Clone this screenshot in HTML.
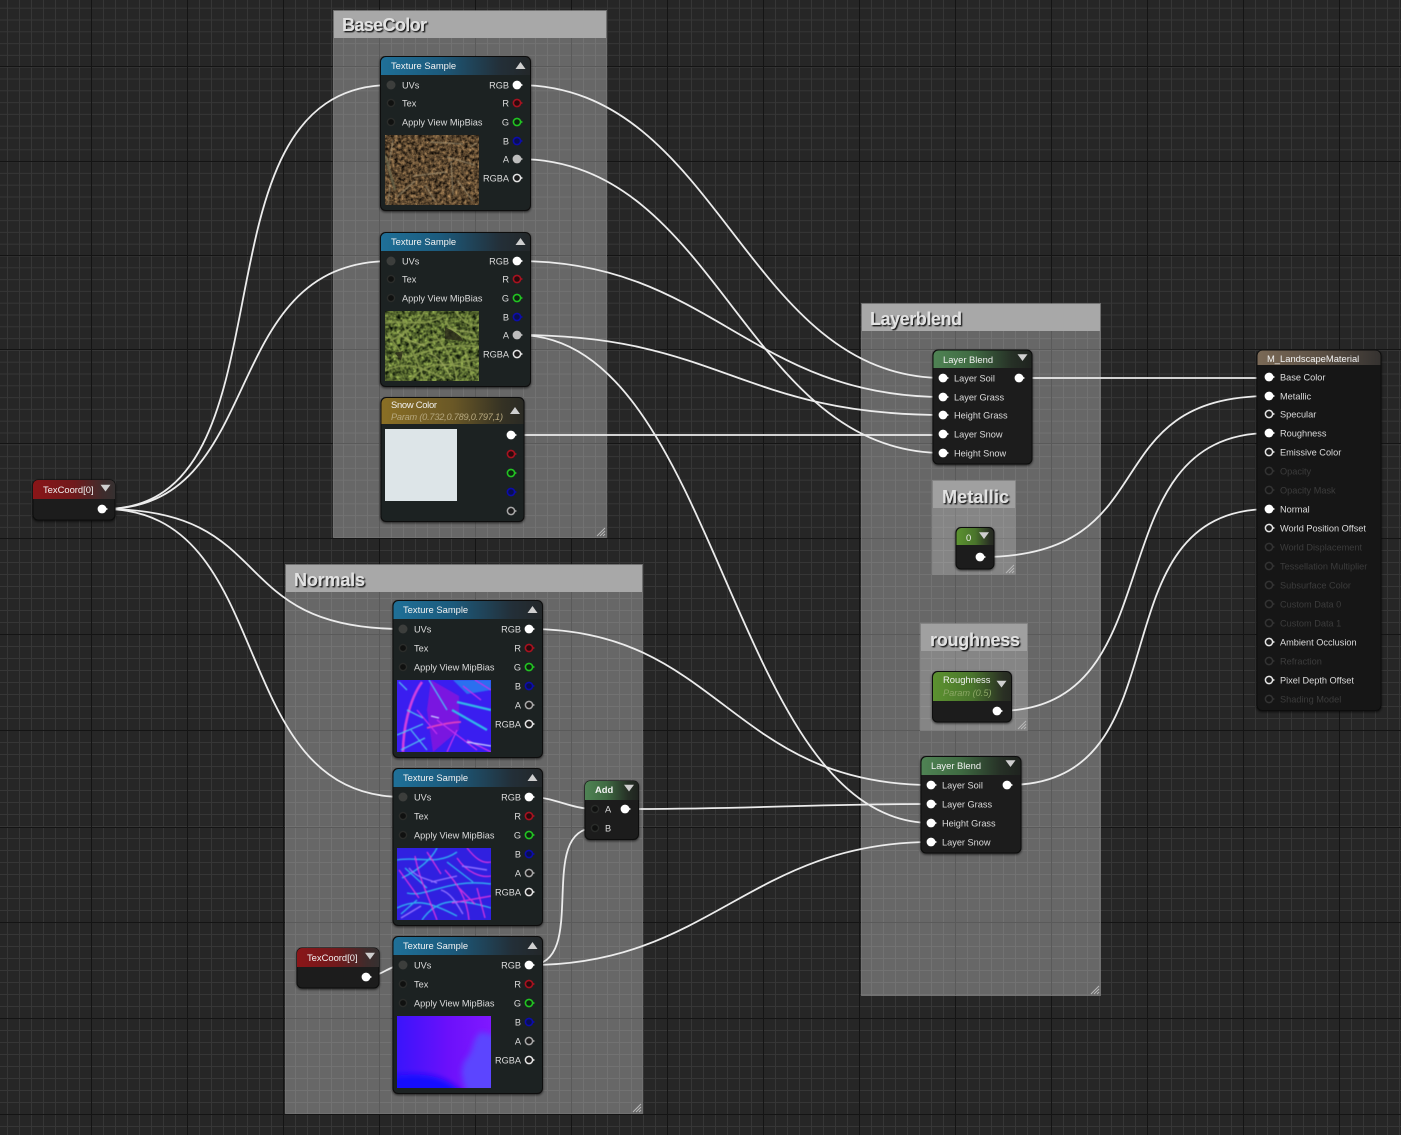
<!DOCTYPE html>
<html lang="en"><head><meta charset="utf-8"><title>M_LandscapeMaterial</title>
<style>
html,body{margin:0;padding:0;background:#262626;overflow:hidden}
svg{display:block}
text{font-family:"Liberation Sans",sans-serif;font-size:9.2px;fill:#dcdcdc}
.h{fill:#f2f2f2;font-size:9.4px}
.t{font-weight:bold;font-size:18px;fill:#e2e2e2}
.e{text-anchor:end}
.i{font-style:italic}
.d{fill:#3c3c3c}
.w{fill:none;stroke:#ececec;stroke-width:1.8}
.n{stroke:#0b0b0b;stroke-width:1}
</style></head><body>
<svg xmlns="http://www.w3.org/2000/svg" width="1401" height="1135" viewBox="0 0 1401 1135">
<defs>
<pattern id="gx" width="12" height="2000" patternUnits="userSpaceOnUse" x="7"><rect width="1" height="2000" fill="#363636"/></pattern>
<pattern id="gy1" width="2000" height="11.8" patternUnits="userSpaceOnUse" y="7.7"><rect width="2000" height="1" fill="#363636"/></pattern>
<pattern id="gy2" width="2000" height="12" patternUnits="userSpaceOnUse" y="10"><rect width="2000" height="1" fill="#363636"/></pattern>
<linearGradient id="hT" x1="0" x2="1" y1="0" y2="0"><stop offset="0" stop-color="#1f7098"/><stop offset=".4" stop-color="#1c5a7c"/><stop offset=".8" stop-color="#232f38"/><stop offset="1" stop-color="#232729"/></linearGradient>
<linearGradient id="hL" x1="0" x2="1" y1="0" y2="0"><stop offset="0" stop-color="#4f8354"/><stop offset=".4" stop-color="#3f6a42"/><stop offset=".8" stop-color="#263026"/><stop offset="1" stop-color="#1f231f"/></linearGradient>
<linearGradient id="hR" x1="0" x2="1" y1="0" y2="0"><stop offset="0" stop-color="#8a1518"/><stop offset=".5" stop-color="#701a1c"/><stop offset=".85" stop-color="#3f2c2c"/><stop offset="1" stop-color="#353030"/></linearGradient>
<linearGradient id="hS" x1="0" x2="1" y1="0" y2="0"><stop offset="0" stop-color="#8a6f25"/><stop offset=".5" stop-color="#6a5826"/><stop offset=".85" stop-color="#353224"/><stop offset="1" stop-color="#2a2a24"/></linearGradient>
<linearGradient id="hG" x1="0" x2="1" y1="0" y2="0"><stop offset="0" stop-color="#5c9230"/><stop offset=".5" stop-color="#4a752c"/><stop offset=".9" stop-color="#2a3024"/><stop offset="1" stop-color="#262a22"/></linearGradient>
<linearGradient id="hM" x1="0" x2="1" y1="0" y2="0"><stop offset="0" stop-color="#7a6956"/><stop offset=".55" stop-color="#5a4f44"/><stop offset="1" stop-color="#353230"/></linearGradient>
<linearGradient id="nm3" x1="0" x2="1" y1="0" y2="0"><stop offset="0" stop-color="#3a14fb"/><stop offset=".55" stop-color="#6c10fb"/><stop offset="1" stop-color="#8018ff"/></linearGradient>
<filter id="ds" x="-10%" y="-10%" width="120%" height="120%"><feDropShadow dx="0" dy="1" stdDeviation="1.2" flood-color="#000" flood-opacity=".7"/></filter>
<filter id="ts" x="-5%" y="-20%" width="115%" height="150%"><feDropShadow dx="1.3" dy="1.3" stdDeviation=".5" flood-color="#000" flood-opacity=".9"/></filter>
<filter id="b1"><feGaussianBlur stdDeviation=".45"/></filter>
<filter id="b3" x="-30%" y="-30%" width="160%" height="160%"><feGaussianBlur stdDeviation="3"/></filter>
<filter id="soil" color-interpolation-filters="sRGB" x="0" y="0" width="100%" height="100%"><feTurbulence type="fractalNoise" baseFrequency=".3" numOctaves="3" seed="4"/><feColorMatrix values=".95 0 0 0 -.12  .75 0 0 0 -.1  .5 0 0 0 -.07  0 0 0 0 1"/></filter>
<filter id="grass" color-interpolation-filters="sRGB" x="0" y="0" width="100%" height="100%"><feTurbulence type="fractalNoise" baseFrequency=".25" numOctaves="3" seed="9"/><feColorMatrix values=".85 0 0 0 -.1  .95 0 0 0 -.08  .45 0 0 0 -.05  0 0 0 0 1"/></filter>
<g id="pw"><circle r="4.4" fill="#fff"/><path d="M4.2 -1.3L6 0L4.200 1.3Z" fill="#fff"/></g>
<g id="pa"><circle r="4.4" fill="#bdbdbd"/><path d="M4.2 -1.3L6 0L4.200 1.3Z" fill="#bdbdbd"/></g>
<g id="pr"><circle r="3.6" fill="#2a0a0c" stroke="#a81220" stroke-width="1.6"/><path d="M4.2 -1.3L6 0L4.200 1.3Z" fill="#a81220"/></g>
<g id="pg"><circle r="3.6" fill="#0e2410" stroke="#22c422" stroke-width="1.6"/><path d="M4.2 -1.3L6 0L4.200 1.3Z" fill="#22c422"/></g>
<g id="pb"><circle r="3.6" fill="#0a0f50" stroke="#0c0cac" stroke-width="1.6"/><path d="M4.2 -1.3L6 0L4.200 1.3Z" fill="#0c0cac"/></g>
<g id="po"><circle r="3.6" fill="#1b1b1b" stroke="#e4e4e4" stroke-width="1.5"/><path d="M4.2 -1.3L6 0L4.200 1.3Z" fill="#e4e4e4"/></g>
<g id="ps"><circle r="3.6" fill="#1b1b1b" stroke="#a8a8a8" stroke-width="1.5"/><path d="M4.2 -1.3L6 0L4.200 1.3Z" fill="#a8a8a8"/></g>
<g id="pd"><circle r="3.6" fill="#151515" stroke="#333" stroke-width="1.5"/><path d="M4.2 -1.3L6 0L4.200 1.3Z" fill="#333"/></g>
<g id="pu"><circle r="4.5" fill="#3c3e3c"/></g>
<g id="pt"><circle r="3.6" fill="#101110" stroke="#2a2c2a" stroke-width="1.4"/></g>
<path id="up" d="M-5 3.5L0 -3.500L5 3.500Z" fill="#cfcfcf"/>
<path id="dn" d="M-5 -3.200L5 -3.200L0 3.500Z" fill="#cfcfcf"/>
<g id="rs" stroke="#b8b8b8" stroke-width="1"><path d="M-9 -1L-1 -9M-6 -1L-1 -6M-3 -1L-1 -3"/></g>
</defs>

<!-- grid -->
<rect width="1401" height="1135" fill="#262626"/>
<rect width="1401" height="1135" fill="url(#gx)"/>
<rect width="1401" height="538" fill="url(#gy1)"/>
<rect y="538" width="1401" height="597" fill="url(#gy2)"/>
<g fill="#141414">
<rect x="91" width="1" height="1135"/><rect x="187" width="1" height="1135"/><rect x="283" width="1" height="1135"/><rect x="379" width="1" height="1135"/><rect x="475" width="1" height="1135"/><rect x="571" width="1" height="1135"/><rect x="667" width="1" height="1135"/><rect x="763" width="1" height="1135"/><rect x="859" width="1" height="1135"/><rect x="955" width="1" height="1135"/><rect x="1051" width="1" height="1135"/><rect x="1147" width="1" height="1135"/><rect x="1243" width="1" height="1135"/><rect x="1339" width="1" height="1135"/>
<rect y="66" width="1401" height="1"/><rect y="161" width="1401" height="1"/><rect y="255" width="1401" height="1"/><rect y="349" width="1401" height="1"/><rect y="443" width="1401" height="1"/><rect y="538" width="1401" height="1"/><rect y="634" width="1401" height="1"/><rect y="730" width="1401" height="1"/><rect y="827" width="1401" height="1"/><rect y="922" width="1401" height="1"/><rect y="1018" width="1401" height="1"/><rect y="1114" width="1401" height="1"/>
</g>

<!-- comment boxes -->
<g fill="#fff" fill-opacity=".3" stroke="#8c8c8c" stroke-opacity=".6">
<rect x="333.500" y="10.500" width="273" height="527"/>
<rect x="285.500" y="564.500" width="357" height="549"/>
<rect x="861.500" y="303.500" width="239" height="692"/>
<rect x="932.500" y="480.500" width="83" height="94" fill-opacity=".2"/>
<rect x="920.500" y="623.500" width="107" height="107" fill-opacity=".2"/>
</g>
<g fill="#a8a8a8">
<rect x="334" y="11" width="272" height="27"/>
<rect x="286" y="565" width="356" height="27"/>
<rect x="862" y="304" width="238" height="27"/>
<rect x="933" y="481" width="82" height="27" fill="#a0a0a0"/>
<rect x="921" y="624" width="106" height="27" fill="#a0a0a0"/>
</g>
<g filter="url(#ts)">
<text class="t" x="342" y="31" textLength="85">BaseColor</text>
<text class="t" x="294" y="586" textLength="71">Normals</text>
<text class="t" x="870" y="325" textLength="92">Layerblend</text>
<text class="t" x="942" y="503" textLength="67">Metallic</text>
<text class="t" x="930" y="646" textLength="90">roughness</text>
</g>
<use href="#rs" x="606" y="537"/><use href="#rs" x="642" y="1113"/><use href="#rs" x="1100" y="995"/><use href="#rs" x="1015" y="574"/><use href="#rs" x="1027" y="730"/>

<!-- wires -->
<g class="w">
<path class="w" d="M104 509C304 509 180 85 391 85"/>
<path class="w" d="M104 509C270 509 214 261 391 261"/>
<path class="w" d="M104 509C280 509 223 629 403 629"/>
<path class="w" d="M104 509C280 509 223 797 403 797"/>
<path class="w" d="M367 977C380 977 390 965 403 965"/>
<path class="w" d="M518 85C720 85 744 378 944 378"/>
<path class="w" d="M518 159C720 159 744 453 944 453"/>
<path class="w" d="M518 261C710 261 750 397 944 397"/>
<path class="w" d="M518 335C720 335 740 415 944 415"/>
<path class="w" d="M518 335C720 335 730 823 932 823"/>
<path class="w" d="M512 435H944"/>
<path class="w" d="M530 629C720 629 730 785 932 785"/>
<path class="w" d="M530 797C555 797 570 809 595 809"/>
<path class="w" d="M626 809C760 809 800 804 932 804"/>
<path class="w" d="M530 965C590 965 535 828 595 828"/>
<path class="w" d="M530 965C710 965 750 842 932 842"/>
<path class="w" d="M1020 378H1270"/>
<path class="w" d="M981 557C1170 557 1090 396 1270 396"/>
<path class="w" d="M998 711C1180 711 1090 433 1270 433"/>
<path class="w" d="M1008 785C1190 785 1090 509 1270 509"/>
</g>

<!-- TexCoord 1 -->
<g filter="url(#ds)"><rect class="n" x="33" y="480" width="82" height="40" rx="5" fill="#1b1c1b"/></g>
<path d="M33 499V485a5 5 0 0 1 5-5H110a5 5 0 0 1 5 5V499Z" fill="url(#hR)"/>
<text class="h" x="43" y="493">TexCoord[0]</text><use href="#dn" x="105.500" y="488"/>
<use href="#pw" x="102" y="509"/>

<!-- TS1 -->
<g filter="url(#ds)"><rect class="n" x="380.500" y="56.500" width="150" height="154" rx="5" fill="#1f2120"/></g>
<path d="M381 75V62a5 5 0 0 1 5-5H525a5 5 0 0 1 5 5V75Z" fill="url(#hT)"/>
<text class="h" x="391" y="69">Texture Sample</text><use href="#up" x="520.500" y="65.500"/>
<use href="#pu" x="391" y="85"/><use href="#pt" x="391" y="103"/><use href="#pt" x="391" y="122"/>
<text x="402" y="88.500">UVs</text><text x="402" y="106.500">Tex</text><text x="402" y="125.500">Apply View MipBias</text>
<text class="e" x="509" y="88.500">RGB</text><text class="e" x="509" y="106.500">R</text><text class="e" x="509" y="125.500">G</text><text class="e" x="509" y="144.500">B</text><text class="e" x="509" y="162.500">A</text><text class="e" x="509" y="181.500">RGBA</text>
<use href="#pw" x="517" y="85"/><use href="#pr" x="517" y="103"/><use href="#pg" x="517" y="122"/><use href="#pb" x="517" y="141"/><use href="#pa" x="517" y="159"/><use href="#po" x="517" y="178"/>
<svg x="385" y="135" width="94" height="70" viewBox="0 0 94 70">
<rect width="94" height="70" filter="url(#soil)"/>
<g fill="none" stroke="#a89878" stroke-width="1.2" opacity=".7" filter="url(#b1)">
<path d="M45 7L78 9M28 41L62 37M5 50L3 70M62 22L90 30M66 26L68 60M72 45L88 66M12 62L30 46M8 5L4 30M85 12L92 8M40 50L50 66"/>
<path d="M20 12L30 30M50 25L40 42M75 30L80 42" stroke="#6e5a40"/>
<path d="M0 20L10 55" stroke="#6a6a50" stroke-width="2.500"/>
</g></svg>

<!-- TS2 -->
<g filter="url(#ds)"><rect class="n" x="380.500" y="232.500" width="150" height="154" rx="5" fill="#1f2120"/></g>
<path d="M381 251V238a5 5 0 0 1 5-5H525a5 5 0 0 1 5 5V251Z" fill="url(#hT)"/>
<text class="h" x="391" y="245">Texture Sample</text><use href="#up" x="520.500" y="241.500"/>
<use href="#pu" x="391" y="261"/><use href="#pt" x="391" y="279"/><use href="#pt" x="391" y="298"/>
<text x="402" y="264.500">UVs</text><text x="402" y="282.500">Tex</text><text x="402" y="301.500">Apply View MipBias</text>
<text class="e" x="509" y="264.500">RGB</text><text class="e" x="509" y="282.500">R</text><text class="e" x="509" y="301.500">G</text><text class="e" x="509" y="320.500">B</text><text class="e" x="509" y="338.500">A</text><text class="e" x="509" y="357.500">RGBA</text>
<use href="#pw" x="517" y="261"/><use href="#pr" x="517" y="279"/><use href="#pg" x="517" y="298"/><use href="#pb" x="517" y="317"/><use href="#pa" x="517" y="335"/><use href="#po" x="517" y="354"/>
<svg x="385" y="311" width="94" height="70" viewBox="0 0 94 70">
<rect width="94" height="70" filter="url(#grass)"/>
<g fill="none" stroke="#8c9e50" stroke-width="1.600" opacity=".9" filter="url(#b1)">
<path d="M0 12C20 8 40 18 60 4M5 30C25 20 35 10 40 0M10 45C30 50 50 30 94 36M0 60C20 50 35 55 60 68M25 70C40 50 60 50 94 60M60 10C70 25 85 30 94 28M48 22C60 35 70 50 72 70M18 8C22 30 30 45 40 70M70 0C78 10 85 16 94 14M2 22L22 50M55 55L94 48M80 40L88 68M34 34L60 28"/>
<path d="M12 20C20 30 28 30 40 35M44 42C55 45 62 60 66 66M65 18L90 22" stroke="#a8b468" stroke-width="1"/>
</g>
<path d="M60 16C68 20 76 24 78 30L60 28ZM10 42L18 40L16 50Z" fill="#2a2a1a" opacity=".8"/>
</svg>

<!-- Snow Color -->
<g filter="url(#ds)"><rect class="n" x="381" y="397.500" width="143" height="124" rx="5" fill="#1f2120"/></g>
<path d="M381.500 424V403a5 5 0 0 1 5-5H518.500a5 5 0 0 1 5 5V424Z" fill="url(#hS)"/>
<text class="h" x="391" y="408" textLength="46">Snow Color</text><text class="i" x="391" y="420" style="fill:#b5a77e" textLength="112">Param (0.732,0.789,0.797,1)</text>
<use href="#up" x="515" y="410.500"/>
<rect x="385" y="429" width="72" height="72" fill="#dde5e8"/>
<use href="#pw" x="511" y="435"/><use href="#pr" x="511" y="454"/><use href="#pg" x="511" y="473"/><use href="#pb" x="511" y="492"/><use href="#ps" x="511" y="511"/>

<!-- N1 -->
<g filter="url(#ds)"><rect class="n" x="393" y="600.500" width="149.500" height="157" rx="5" fill="#1f2120"/></g>
<path d="M393.500 619V606a5 5 0 0 1 5-5H537a5 5 0 0 1 5 5V619Z" fill="url(#hT)"/>
<text class="h" x="403" y="613">Texture Sample</text><use href="#up" x="532.500" y="609.500"/>
<use href="#pu" x="403" y="629"/><use href="#pt" x="403" y="648"/><use href="#pt" x="403" y="667"/>
<text x="414" y="632.500">UVs</text><text x="414" y="651.500">Tex</text><text x="414" y="670.500">Apply View MipBias</text>
<text class="e" x="521" y="632.500">RGB</text><text class="e" x="521" y="651.500">R</text><text class="e" x="521" y="670.500">G</text><text class="e" x="521" y="689.500">B</text><text class="e" x="521" y="708.500">A</text><text class="e" x="521" y="727.500">RGBA</text>
<use href="#pw" x="529" y="629"/><use href="#pr" x="529" y="648"/><use href="#pg" x="529" y="667"/><use href="#pb" x="529" y="686"/><use href="#ps" x="529" y="705"/><use href="#po" x="529" y="724"/>
<svg x="397" y="680" width="94" height="72" viewBox="0 0 94 72">
<rect width="94" height="72" fill="#3a1ef0"/>
<path d="M34 0L62 16L62 50L36 72L30 30Z" fill="#7a18e0" filter="url(#b1)"/><path d="M56 0H94V10L70 14Z" fill="#2a70f0" filter="url(#b1)"/>
<g fill="none" filter="url(#b1)">
<path d="M25 2C12 20 6 50 6 72" stroke="#d040e0" stroke-width="2.600"/>
<path d="M2 2L10 10M32 0L50 30M0 55L26 44M4 70L28 58M10 30L26 38M14 50L30 70" stroke="#50b0f0" stroke-width="1.400"/>
<path d="M55 30L90 50M60 22L94 30" stroke="#30b8e8" stroke-width="2.200"/>
<path d="M30 48C44 44 58 42 64 42" stroke="#e040c0" stroke-width="1.800"/>
<path d="M40 40L80 70M60 50L50 72M78 0L94 10M70 60L94 72M66 6L84 20M20 30L40 54" stroke="#c030f0" stroke-width="1.300"/>
<path d="M70 62L94 66M34 36L42 38" stroke="#c8d0ff" stroke-width="1.300"/>
</g></svg>

<!-- N2 -->
<g filter="url(#ds)"><rect class="n" x="393" y="768.500" width="149.500" height="157" rx="5" fill="#1f2120"/></g>
<path d="M393.500 787V774a5 5 0 0 1 5-5H537a5 5 0 0 1 5 5V787Z" fill="url(#hT)"/>
<text class="h" x="403" y="781">Texture Sample</text><use href="#up" x="532.500" y="777.500"/>
<use href="#pu" x="403" y="797"/><use href="#pt" x="403" y="816"/><use href="#pt" x="403" y="835"/>
<text x="414" y="800.500">UVs</text><text x="414" y="819.500">Tex</text><text x="414" y="838.500">Apply View MipBias</text>
<text class="e" x="521" y="800.500">RGB</text><text class="e" x="521" y="819.500">R</text><text class="e" x="521" y="838.500">G</text><text class="e" x="521" y="857.500">B</text><text class="e" x="521" y="876.500">A</text><text class="e" x="521" y="895.500">RGBA</text>
<use href="#pw" x="529" y="797"/><use href="#pr" x="529" y="816"/><use href="#pg" x="529" y="835"/><use href="#pb" x="529" y="854"/><use href="#ps" x="529" y="873"/><use href="#po" x="529" y="892"/>
<svg x="397" y="848" width="94" height="72" viewBox="0 0 94 72">
<rect width="94" height="72" fill="#3020e0"/>
<g fill="none" stroke-width="1.400" filter="url(#b1)">
<path d="M0 12C20 8 40 18 60 4M5 30C25 20 35 10 40 0M10 45C30 50 50 30 94 36M0 60C20 50 35 55 60 68M25 72C40 50 60 50 94 60M8 20L30 40M50 14L76 34M4 66L20 52" stroke="#30a8f0"/>
<path d="M60 10C70 25 85 30 94 28M48 22C60 35 70 50 72 72M18 8C22 30 30 45 40 72M70 0C78 10 85 16 94 14M2 22L22 50M55 55L94 48M80 40L88 70M30 4L44 26M62 40L78 56" stroke="#c830e0"/>
<path d="M34 34L60 28M12 20C20 30 28 30 40 35M44 42C55 45 62 60 66 66M65 18L90 22M4 70L24 58" stroke="#9070ff"/>
</g></svg>

<!-- N3 -->
<g filter="url(#ds)"><rect class="n" x="393" y="936.500" width="149.500" height="157" rx="5" fill="#1f2120"/></g>
<path d="M393.500 955V942a5 5 0 0 1 5-5H537a5 5 0 0 1 5 5V955Z" fill="url(#hT)"/>
<text class="h" x="403" y="949">Texture Sample</text><use href="#up" x="532.500" y="945.500"/>
<use href="#pu" x="403" y="965"/><use href="#pt" x="403" y="984"/><use href="#pt" x="403" y="1003"/>
<text x="414" y="968.500">UVs</text><text x="414" y="987.500">Tex</text><text x="414" y="1006.500">Apply View MipBias</text>
<text class="e" x="521" y="968.500">RGB</text><text class="e" x="521" y="987.500">R</text><text class="e" x="521" y="1006.500">G</text><text class="e" x="521" y="1025.500">B</text><text class="e" x="521" y="1044.500">A</text><text class="e" x="521" y="1063.500">RGBA</text>
<use href="#pw" x="529" y="965"/><use href="#pr" x="529" y="984"/><use href="#pg" x="529" y="1003"/><use href="#pb" x="529" y="1022"/><use href="#ps" x="529" y="1041"/><use href="#po" x="529" y="1060"/>
<svg x="397" y="1016" width="94" height="72" viewBox="0 0 94 72">
<rect width="94" height="72" fill="url(#nm3)"/>
<path d="M-5 60C25 56 50 58 68 80H-5Z" fill="#1408ff" filter="url(#b3)"/>
<path d="M100 20V80H72C64 66 62 50 70 42C78 32 74 24 84 16Z" fill="#5c44ff" filter="url(#b3)"/>
</svg>

<!-- TexCoord 2 -->
<g filter="url(#ds)"><rect class="n" x="297" y="948" width="82" height="40" rx="5" fill="#1b1c1b"/></g>
<path d="M297 967V953a5 5 0 0 1 5-5H374a5 5 0 0 1 5 5V967Z" fill="url(#hR)"/>
<text class="h" x="307" y="961">TexCoord[0]</text><use href="#dn" x="370" y="956"/>
<use href="#pw" x="366" y="977"/>

<!-- Add -->
<g filter="url(#ds)"><rect class="n" x="585" y="781" width="53.500" height="58.500" rx="5" fill="#1b1c1b"/></g>
<path d="M585 800V786a5 5 0 0 1 5-5H633.500a5 5 0 0 1 5 5V800Z" fill="url(#hL)"/>
<text class="h" x="595" y="793" style="font-weight:bold">Add</text><use href="#dn" x="629" y="788"/>
<use href="#pt" x="595" y="809"/><use href="#pt" x="595" y="828"/>
<text x="605" y="812.500">A</text><text x="605" y="831.500">B</text>
<use href="#pw" x="625" y="809"/>

<!-- Layer Blend 1 -->
<g filter="url(#ds)"><rect class="n" x="933" y="350" width="99" height="114" rx="5" fill="#1b1e1b"/></g>
<path d="M933.500 368V355.500a5 5 0 0 1 5-5H1026.500a5 5 0 0 1 5 5V368Z" fill="url(#hL)"/>
<text class="h" x="943" y="363">Layer Blend</text><use href="#dn" x="1022.500" y="357.500"/>
<use href="#pw" x="943" y="378"/><use href="#pw" x="943" y="397"/><use href="#pw" x="943" y="415"/><use href="#pw" x="943" y="434"/><use href="#pw" x="943" y="453"/><use href="#pw" x="1019" y="378"/>
<text x="954" y="381.500">Layer Soil</text><text x="954" y="400.500">Layer Grass</text><text x="954" y="418.500">Height Grass</text><text x="954" y="437.500">Layer Snow</text><text x="954" y="456.500">Height Snow</text>

<!-- Metallic node -->
<g filter="url(#ds)"><rect class="n" x="956" y="527.500" width="38" height="41.500" rx="5" fill="#1b1e1b"/></g>
<path d="M956.500 545V533a5 5 0 0 1 5-5H988.500a5 5 0 0 1 5 5V545Z" fill="url(#hG)"/>
<text class="h" x="966" y="541">0</text><use href="#dn" x="984" y="535.500"/>
<use href="#pw" x="980" y="557"/>

<!-- Roughness node -->
<g filter="url(#ds)"><rect class="n" x="932.500" y="671.500" width="79" height="50.500" rx="5" fill="#1b1e1b"/></g>
<path d="M933 701V677a5 5 0 0 1 5-5H1006a5 5 0 0 1 5 5V701Z" fill="url(#hG)"/>
<text class="h" x="943" y="683">Roughness</text><text class="i" x="943" y="696" style="fill:#8ba765">Param (0.5)</text><use href="#dn" x="1001.500" y="684"/>
<use href="#pw" x="997" y="711"/>

<!-- Layer Blend 2 -->
<g filter="url(#ds)"><rect class="n" x="921" y="756.500" width="100" height="96.500" rx="5" fill="#1b1e1b"/></g>
<path d="M921.500 775V762a5 5 0 0 1 5-5H1015.500a5 5 0 0 1 5 5V775Z" fill="url(#hL)"/>
<text class="h" x="931" y="769">Layer Blend</text><use href="#dn" x="1010.500" y="763.500"/>
<use href="#pw" x="931" y="785"/><use href="#pw" x="931" y="804"/><use href="#pw" x="931" y="823"/><use href="#pw" x="931" y="842"/><use href="#pw" x="1007" y="785"/>
<text x="942" y="788.500">Layer Soil</text><text x="942" y="807.500">Layer Grass</text><text x="942" y="826.500">Height Grass</text><text x="942" y="845.500">Layer Snow</text>

<!-- Material -->
<g filter="url(#ds)"><rect class="n" x="1257" y="350.500" width="124" height="360" rx="5" fill="#141514"/></g>
<path d="M1257.500 365V355.500a5 5 0 0 1 5-5H1375.500a5 5 0 0 1 5 5V365Z" fill="url(#hM)"/>
<text class="h" x="1267" y="362">M_LandscapeMaterial</text>
<use href="#pw" x="1269" y="377"/><use href="#pw" x="1269" y="396"/><use href="#po" x="1269" y="414"/><use href="#pw" x="1269" y="433"/><use href="#po" x="1269" y="452"/><use href="#pd" x="1269" y="471"/><use href="#pd" x="1269" y="490"/><use href="#pw" x="1269" y="509"/><use href="#po" x="1269" y="528"/><use href="#pd" x="1269" y="547"/><use href="#pd" x="1269" y="566"/><use href="#pd" x="1269" y="585"/><use href="#pd" x="1269" y="604"/><use href="#pd" x="1269" y="623"/><use href="#po" x="1269" y="642"/><use href="#pd" x="1269" y="661"/><use href="#po" x="1269" y="680"/><use href="#pd" x="1269" y="699"/>
<text x="1280" y="380.500">Base Color</text>
<text x="1280" y="399.500">Metallic</text>
<text x="1280" y="417.500">Specular</text>
<text x="1280" y="436.500">Roughness</text>
<text x="1280" y="455.500">Emissive Color</text>
<text class="d" x="1280" y="474.500">Opacity</text>
<text class="d" x="1280" y="493.500">Opacity Mask</text>
<text x="1280" y="512.500">Normal</text>
<text x="1280" y="531.500">World Position Offset</text>
<text class="d" x="1280" y="550.500">World Displacement</text>
<text class="d" x="1280" y="569.500">Tessellation Multiplier</text>
<text class="d" x="1280" y="588.500">Subsurface Color</text>
<text class="d" x="1280" y="607.500">Custom Data 0</text>
<text class="d" x="1280" y="626.500">Custom Data 1</text>
<text x="1280" y="645.500">Ambient Occlusion</text>
<text class="d" x="1280" y="664.500">Refraction</text>
<text x="1280" y="683.500">Pixel Depth Offset</text>
<text class="d" x="1280" y="702.500">Shading Model</text>
</svg>
</body></html>
